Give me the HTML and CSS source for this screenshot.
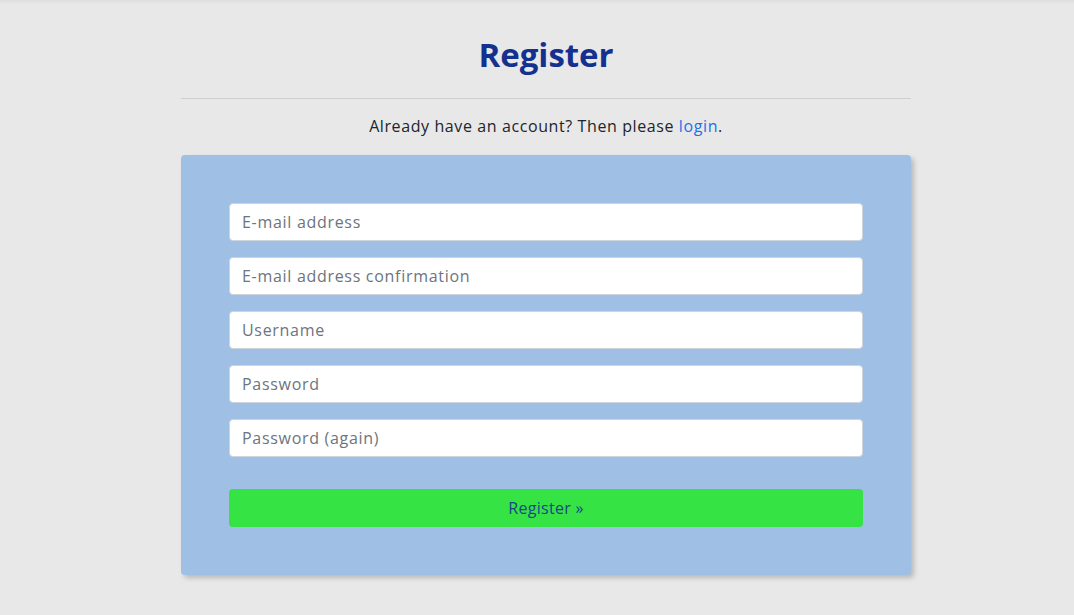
FILE: index.html
```html
<!DOCTYPE html>
<html lang="en">
<head>
<meta charset="utf-8">
<title>Register</title>
<link rel="stylesheet" href="styles.css">
</head>
<body>
<div class="topshade"></div>
<main class="container">
  <h1 class="title">Register</h1>
  <hr class="divider">
  <p class="lead">Already have an account? Then please <a href="#" class="link">login</a>.</p>
  <form class="card">
    <input class="field" type="email" placeholder="E-mail address">
    <input class="field" type="email" placeholder="E-mail address confirmation">
    <input class="field" type="text" placeholder="Username">
    <input class="field" type="password" placeholder="Password">
    <input class="field" type="password" placeholder="Password (again)">
    <button class="submit" type="button">Register &raquo;</button>
  </form>
</main>
</body>
</html>
```
FILE: styles.css
```css
html, body {
  margin: 0;
  padding: 0;
}
body {
  background: #e8e8e8;
  font-family: "Open Sans", "DejaVu Sans", sans-serif;
  color: #212529;
  min-height: 615px;
  padding-left: 18px;
}
.topshade {
  height: 5px;
  margin-left: -18px;
  background: linear-gradient(#dedede, #e8e8e8);
}
.container {
  width: 730px;
  margin: 0 auto;
  display: flex;
  flex-direction: column;
}
.title {
  margin: 30px 0 0;
  text-align: center;
  font-size: 33px;
  line-height: 40px;
  font-weight: 700;
  color: #15318f;
  letter-spacing: 0;
}
.divider {
  margin: 23px 0 0;
  border: 0;
  border-top: 1px solid #cfcfcf;
  height: 0;
}
.lead {
  margin: 15px 0 0;
  text-align: center;
  font-size: 16px;
  line-height: 24px;
  letter-spacing: 0.6px;
}
.link {
  color: #1a73e8;
  text-decoration: none;
}
.card {
  margin-top: 17px;
  background: #a0bfe4;
  border-radius: 4px;
  box-shadow: 3px 3px 5px rgba(0, 0, 0, 0.2);
  padding: 48px;
  display: flex;
  flex-direction: column;
  gap: 16px;
}
.field {
  box-sizing: border-box;
  height: 38px;
  border: 1px solid #ced4da;
  border-radius: 4px;
  background: #fff;
  padding: 0 12px;
  font-family: "Open Sans", "DejaVu Sans", sans-serif;
  font-size: 16px;
  letter-spacing: 0.7px;
  color: #212529;
}
.field::placeholder {
  color: #6c757d;
}
.submit {
  margin-top: 16px;
  height: 38px;
  border: 0;
  border-radius: 4px;
  background: #36e344;
  color: #16478a;
  font-family: "Open Sans", "DejaVu Sans", sans-serif;
  font-size: 16px;
  letter-spacing: 0.3px;
  cursor: pointer;
}
```
